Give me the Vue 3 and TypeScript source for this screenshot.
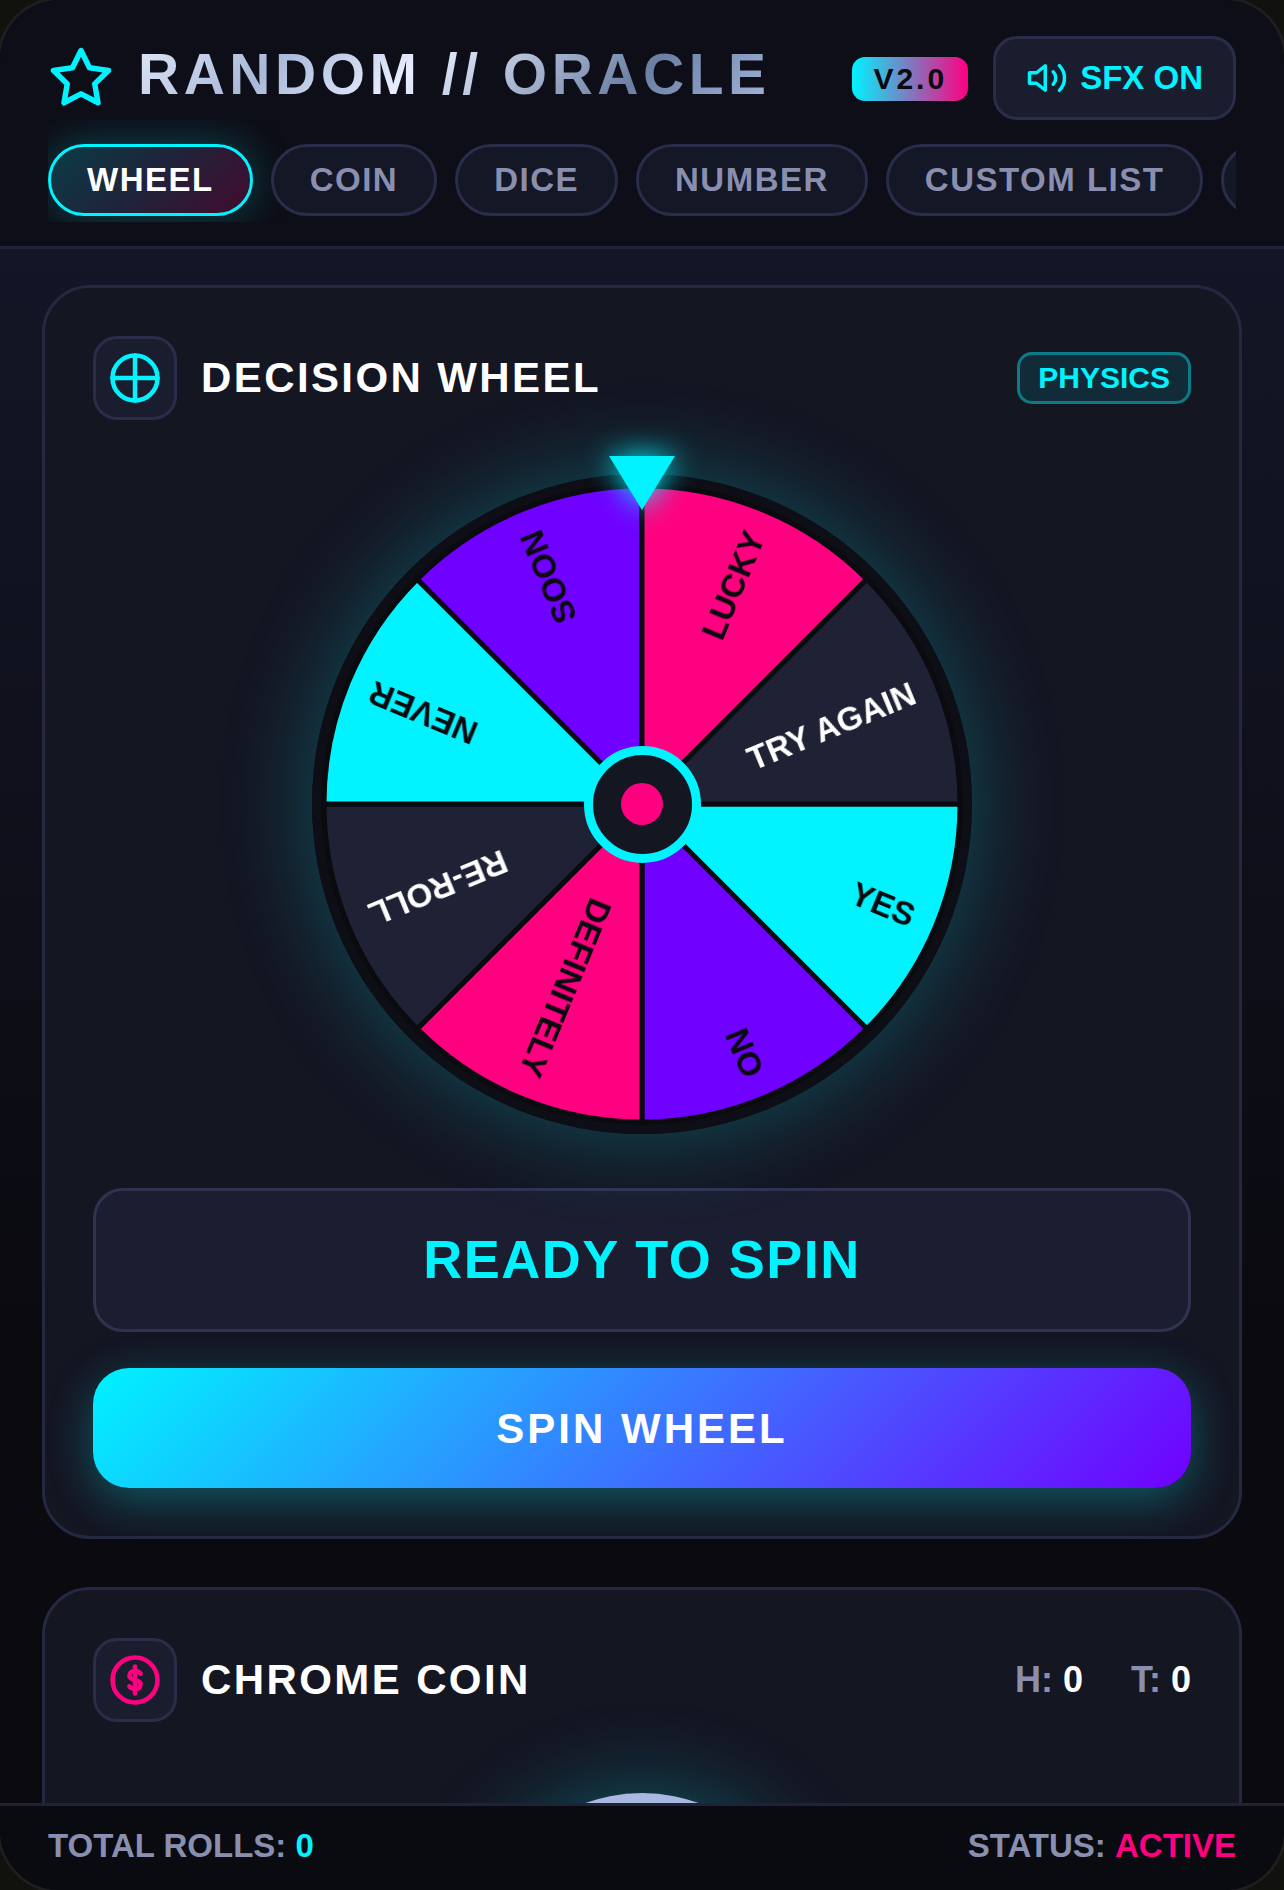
<template>
	<div class="frame">
		<header class="top">
			<div class="top-row">
				<div class="brand">
					<svg class="star" viewBox="0 0 24 24" fill="none" stroke="#00f3ff" stroke-width="2" stroke-linecap="round" stroke-linejoin="round">
						<polygon points="12 2 15.09 8.26 22 9.27 17 14.14 18.18 21.02 12 17.77 5.82 21.02 7 14.14 2 9.27 8.91 8.26 12 2" />
					</svg>
					<h1>RANDOM // ORACLE</h1>
				</div>
				<div class="top-actions">
					<span class="version">V2.0</span>
					<button class="sfx">
						<svg viewBox="0 0 24 24" fill="none" stroke="#00f3ff" stroke-width="2" stroke-linecap="round" stroke-linejoin="round">
							<polygon points="11 5 6 9 2 9 2 15 6 15 11 19 11 5" />
							<path d="M15.54 8.46a5 5 0 0 1 0 7.07" />
							<path d="M19.07 4.93a10 10 0 0 1 0 14.14" />
						</svg>
						SFX ON
					</button>
				</div>
			</div>
			<nav class="tabs">
				<button v-for="tab in tabs" :key="tab" class="tab" :class="{ active: tab === 'WHEEL' }">
					{{ tab }}
				</button>
				<button class="tab more"></button>
			</nav>
		</header>

		<main class="content">
			<section class="card">
				<div class="card-head">
					<div class="card-icon">
						<svg viewBox="0 0 24 24" fill="none" stroke="#00f3ff" stroke-width="2" stroke-linecap="round">
							<circle cx="12" cy="12" r="10" />
							<path d="M12 2v20M2 12h20" />
						</svg>
					</div>
					<h2>DECISION WHEEL</h2>
					<span class="physics">PHYSICS</span>
				</div>

				<div class="wheel">
					<svg viewBox="0 0 660 660">
						<circle cx="330" cy="330" r="330" fill="#0d0e16" />
						<path
							v-for="seg in segments"
							:key="seg.label"
							:d="seg.path"
							:fill="seg.color"
							stroke="#0a0a0f"
							stroke-width="5"
						/>
						<g class="wheel-labels">
							<text
								v-for="seg in segments"
								:key="seg.label"
								:transform="`rotate(${seg.mid} 330 330)`"
								x="624"
								y="342"
								text-anchor="end"
								:fill="seg.text"
							>{{ seg.label }}</text>
						</g>
					</svg>
					<div class="pointer"></div>
					<div class="hub"><span></span></div>
				</div>

				<div class="status-box">READY TO SPIN</div>
				<button class="spin">SPIN WHEEL</button>
			</section>

			<section class="card">
				<div class="card-head">
					<div class="card-icon">
						<svg viewBox="0 0 24 24" fill="none" stroke="#ff0080" stroke-width="2" stroke-linecap="round" stroke-linejoin="round">
							<circle cx="12" cy="12" r="10" />
							<path d="M14.5 9.2c-.5-.9-1.4-1.2-2.5-1.2-1.4 0-2.5.7-2.5 2 0 2.8 5 1.4 5 4 0 1.3-1.1 2-2.5 2-1.1 0-2-.4-2.5-1.2" />
							<path d="M12 18V6" />
						</svg>
					</div>
					<h2>CHROME COIN</h2>
					<div class="coin-stats">
						<span>H: <b>0</b></span>
						<span>T: <b>0</b></span>
					</div>
				</div>
				<div class="coin"></div>
			</section>
		</main>

		<footer class="bottom">
			<span>TOTAL ROLLS: <b class="cyan">0</b></span>
			<span>STATUS: <b class="pink">ACTIVE</b></span>
		</footer>
	</div>
</template>

<script setup lang="ts">
interface Segment {
	label: string;
	color: string;
	text: string;
	path: string;
	mid: number;
}

const tabs: string[] = ["WHEEL", "COIN", "DICE", "NUMBER", "CUSTOM LIST"];

const CYAN = "#00f3ff";
const VIOLET = "#7000ff";
const PINK = "#ff0080";
const DARK = "#1f2235";

const slices: [string, string][] = [
	["YES", CYAN],
	["NO", VIOLET],
	["DEFINITELY", PINK],
	["RE-ROLL", DARK],
	["NEVER", CYAN],
	["SOON", VIOLET],
	["LUCKY", PINK],
	["TRY AGAIN", DARK],
];

// Wedges run clockwise from 3 o'clock
const segments: Segment[] = slices.map(([label, color], i) => {
	const a0 = (i * 45 * Math.PI) / 180;
	const a1 = ((i + 1) * 45 * Math.PI) / 180;
	const r = 318;
	const x0 = 330 + r * Math.cos(a0);
	const y0 = 330 + r * Math.sin(a0);
	const x1 = 330 + r * Math.cos(a1);
	const y1 = 330 + r * Math.sin(a1);
	return {
		label,
		color,
		text: color === DARK ? "#ffffff" : "#0a0a0f",
		path: `M330 330L${x0} ${y0}A${r} ${r} 0 0 1 ${x1} ${y1}Z`,
		mid: i * 45 + 22.5,
	};
});
</script>

<style>
html,
body {
	margin: 0;
	background: #11110e;
}
</style>

<style scoped>
.frame {
	width: 1284px;
	height: 1890px;
	display: flex;
	flex-direction: column;
	overflow: hidden;
	border-radius: 60px;
	box-shadow: 0 0 0 3px #1e1e20;
	background: #0a0a0f;
	font-family: "Liberation Sans", Arial, sans-serif;
	color: #fff;
}

button {
	font-family: inherit;
	cursor: pointer;
}

.top {
	flex: none;
	padding: 36px 48px 24px;
	background: #0d0e17;
	border-bottom: 3px solid #1f2238;
}

.top-row {
	display: flex;
	align-items: center;
	justify-content: space-between;
}

.brand {
	display: flex;
	align-items: center;
	gap: 24px;
}

.star {
	width: 66px;
	height: 66px;
}

h1 {
	margin: 0;
	padding-bottom: 9px;
	font-size: 57px;
	font-weight: 700;
	letter-spacing: 4.5px;
	background: linear-gradient(135deg, #e0e8f8 0%, #a8b8d8 22%, #e8eeff 43%, #6b7fa3 76%, #a8b8e0 100%);
	-webkit-background-clip: text;
	background-clip: text;
	color: transparent;
}

.top-actions {
	display: flex;
	align-items: center;
	gap: 25px;
}

.version {
	margin-top: 1px;
	padding: 5px 21px;
	border-radius: 13px;
	background: linear-gradient(90deg, #00f3ff, #ff0080);
	color: #0a0a0f;
	font-size: 30px;
	font-weight: 700;
	letter-spacing: 3px;
}

.sfx {
	display: flex;
	align-items: center;
	gap: 12px;
	padding: 18px 30px;
	border: 3px solid #2a2d4a;
	border-radius: 24px;
	background: #1a1d2e;
	color: #00f3ff;
	font-size: 33px;
	font-weight: 700;
}

.sfx svg {
	width: 42px;
	height: 42px;
}

.tabs {
	display: flex;
	gap: 18px;
	padding: 24px 0 6px;
	overflow: hidden;
}

.tab {
	flex: none;
	height: 72px;
	padding: 0 36px;
	border: 3px solid #2a2d4a;
	border-radius: 36px;
	background: #141726;
	color: #8a8fb0;
	font-size: 33px;
	font-weight: 700;
	letter-spacing: 1.5px;
}

.tab.more {
	width: 120px;
}

.tab.active {
	border-color: #00f3ff;
	background: linear-gradient(135deg, rgba(0, 243, 255, 0.2), #20233a 50%, rgba(255, 0, 128, 0.22));
	box-shadow: 0 0 42px rgba(0, 243, 255, 0.25);
	color: #fff;
}

.content {
	flex: 1;
	min-height: 0;
	overflow: hidden;
	padding: 36px 42px;
	display: flex;
	flex-direction: column;
	gap: 48px;
	background: linear-gradient(180deg, #141627 0%, #0a0a0f 72%);
}

.card {
	flex: none;
	padding: 48px;
	border: 3px solid #252840;
	border-radius: 48px;
	background: #141622;
}

.card-head {
	display: flex;
	align-items: center;
	gap: 24px;
}

.card-icon {
	box-sizing: border-box;
	width: 84px;
	height: 84px;
	display: flex;
	align-items: center;
	justify-content: center;
	border: 3px solid #2a2d4a;
	border-radius: 24px;
	background: #1a1d2e;
}

.card-icon svg {
	width: 54px;
	height: 54px;
}

h2 {
	flex: 1;
	margin: 0;
	font-size: 42px;
	font-weight: 700;
	letter-spacing: 2.4px;
}

.physics {
	padding: 6px 18px;
	border: 3px solid rgba(0, 243, 255, 0.4);
	border-radius: 15px;
	background: rgba(0, 243, 255, 0.1);
	color: #00f3ff;
	font-size: 30px;
	font-weight: 700;
}

.coin-stats {
	display: flex;
	gap: 48px;
	color: #8a8fb0;
	font-size: 36px;
	font-weight: 700;
}

.coin-stats b {
	color: #fff;
}

.wheel {
	position: relative;
	width: 660px;
	height: 660px;
	margin: 54px auto;
	border-radius: 50%;
	box-shadow: 0 0 90px rgba(0, 243, 255, 0.26);
}

.wheel svg {
	display: block;
	width: 660px;
	height: 660px;
}

.wheel-labels {
	font-size: 33px;
	font-weight: 700;
	filter: blur(0.6px);
}

.pointer {
	position: absolute;
	top: -18px;
	left: 297px;
	width: 0;
	height: 0;
	border-left: 33px solid transparent;
	border-right: 33px solid transparent;
	border-top: 54px solid #00f3ff;
	filter: drop-shadow(0 0 15px #00f3ff);
}

.hub {
	position: absolute;
	top: 271.5px;
	left: 271.5px;
	box-sizing: border-box;
	width: 117px;
	height: 117px;
	display: flex;
	align-items: center;
	justify-content: center;
	border: 9px solid #00f3ff;
	border-radius: 50%;
	background: #141622;
}

.hub span {
	width: 42px;
	height: 42px;
	border-radius: 50%;
	background: #ff0080;
}

.status-box {
	box-sizing: border-box;
	height: 144px;
	padding-bottom: 2px;
	display: flex;
	align-items: center;
	justify-content: center;
	border: 3px solid #2f3350;
	border-radius: 30px;
	background: #1b1e30;
	color: #00f3ff;
	font-size: 54px;
	font-weight: 700;
	letter-spacing: 1.5px;
}

.spin {
	display: block;
	width: 100%;
	height: 120px;
	margin-top: 36px;
	padding-top: 2px;
	border: none;
	border-radius: 36px;
	background: linear-gradient(135deg, #00f3ff, #7000ff);
	box-shadow: 0 12px 45px rgba(0, 243, 255, 0.3);
	color: #fff;
	font-size: 42px;
	font-weight: 700;
	letter-spacing: 3px;
}

.coin {
	width: 330px;
	height: 330px;
	margin: 71px auto 0;
	border-radius: 50%;
	background: #a8b8e0;
	box-shadow: 0 0 90px rgba(0, 243, 255, 0.3);
}

.bottom {
	box-sizing: border-box;
	flex: none;
	height: 87px;
	display: flex;
	align-items: center;
	justify-content: space-between;
	padding: 0 48px 4px;
	border-top: 3px solid #1f2238;
	background: #0a0b10;
	color: #8a8fb0;
	font-size: 33px;
	font-weight: 700;
}

.cyan {
	color: #00f3ff;
}

.pink {
	color: #ff0080;
}
</style>
